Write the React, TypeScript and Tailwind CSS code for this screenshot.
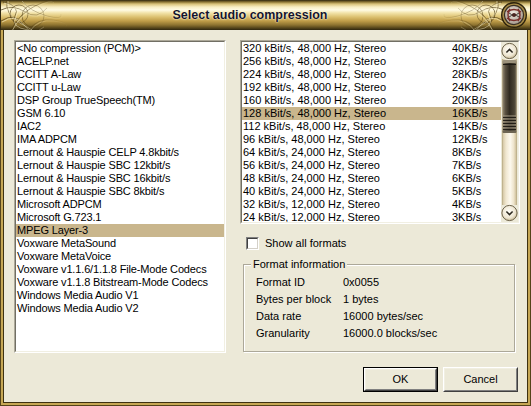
import React from 'react';

const codecs = [
  '<No compression (PCM)>',
  'ACELP.net',
  'CCITT A-Law',
  'CCITT u-Law',
  'DSP Group TrueSpeech(TM)',
  'GSM 6.10',
  'IAC2',
  'IMA ADPCM',
  'Lernout & Hauspie CELP 4.8kbit/s',
  'Lernout & Hauspie SBC 12kbit/s',
  'Lernout & Hauspie SBC 16kbit/s',
  'Lernout & Hauspie SBC 8kbit/s',
  'Microsoft ADPCM',
  'Microsoft G.723.1',
  'MPEG Layer-3',
  'Voxware MetaSound',
  'Voxware MetaVoice',
  'Voxware v1.1.6/1.1.8 File-Mode Codecs',
  'Voxware v1.1.8 Bitstream-Mode Codecs',
  'Windows Media Audio V1',
  'Windows Media Audio V2',
];

const formats: [string, string][] = [
  ['320 kBit/s, 48,000 Hz, Stereo', '40KB/s'],
  ['256 kBit/s, 48,000 Hz, Stereo', '32KB/s'],
  ['224 kBit/s, 48,000 Hz, Stereo', '28KB/s'],
  ['192 kBit/s, 48,000 Hz, Stereo', '24KB/s'],
  ['160 kBit/s, 48,000 Hz, Stereo', '20KB/s'],
  ['128 kBit/s, 48,000 Hz, Stereo', '16KB/s'],
  ['112 kBit/s, 48,000 Hz, Stereo', '14KB/s'],
  ['96 kBit/s, 48,000 Hz, Stereo', '12KB/s'],
  ['64 kBit/s, 24,000 Hz, Stereo', '8KB/s'],
  ['56 kBit/s, 24,000 Hz, Stereo', '7KB/s'],
  ['48 kBit/s, 24,000 Hz, Stereo', '6KB/s'],
  ['40 kBit/s, 24,000 Hz, Stereo', '5KB/s'],
  ['32 kBit/s, 12,000 Hz, Stereo', '4KB/s'],
  ['24 kBit/s, 12,000 Hz, Stereo', '3KB/s'],
];

const info: [string, string][] = [
  ['Format ID', '0x0055'],
  ['Bytes per block', '1 bytes'],
  ['Data rate', '16000 bytes/sec'],
  ['Granularity', '16000.0 blocks/sec'],
];

// knotwork strokes used on both ends of the caption
const knots = [
  'M2 2 Q 20 6 14 16 T 26 29',
  'M0 10 Q 12 4 24 12 T 46 8',
  'M0 21 Q 14 12 22 24 T 42 26',
  'M6 0 Q 4 14 18 22 T 30 29',
  'M10 30 Q 18 14 34 6 T 52 2',
  'M20 0 Q 30 12 46 16 T 60 14',
  'M28 30 Q 36 18 52 20 T 64 26',
];

function Knots({ id, flip }: { id: string; flip?: boolean }) {
  return (
    <svg width="66" height="30" viewBox="0 0 66 30" style={flip ? { transform: 'scaleX(-1)' } : undefined}>
      <defs>
        <linearGradient id={`${id}d`} x1="0" y1="0" x2="66" y2="0" gradientUnits="userSpaceOnUse">
          <stop offset="0" stopColor="#4a3810" stopOpacity="0.75" />
          <stop offset="0.6" stopColor="#4a3810" stopOpacity="0.3" />
          <stop offset="1" stopColor="#4a3810" stopOpacity="0" />
        </linearGradient>
        <linearGradient id={`${id}l`} x1="0" y1="0" x2="66" y2="0" gradientUnits="userSpaceOnUse">
          <stop offset="0" stopColor="#fff6cc" stopOpacity="0.9" />
          <stop offset="1" stopColor="#fff6cc" stopOpacity="0" />
        </linearGradient>
      </defs>
      <g fill="none" strokeWidth="1">
        {knots.map((d, i) => (
          <path key={`d${i}`} d={d} stroke={`url(#${id}d)`} />
        ))}
        <circle cx="18" cy="14" r="9" stroke={`url(#${id}d)`} />
        <circle cx="32" cy="16" r="11" stroke={`url(#${id}d)`} />
      </g>
      <g fill="none" strokeWidth="0.7" transform="translate(1 1)">
        {knots.map((d, i) => (
          <path key={`l${i}`} d={d} stroke={`url(#${id}l)`} />
        ))}
      </g>
    </svg>
  );
}

function Medallion() {
  return (
    <svg width="28" height="28" viewBox="0 0 28 28">
      <defs>
        <radialGradient id="medIn" cx="0.45" cy="0.4" r="0.6">
          <stop offset="0" stopColor="#f2ece4" />
          <stop offset="1" stopColor="#a89c90" />
        </radialGradient>
      </defs>
      <circle cx="14" cy="14" r="13" fill="#2c220c" />
      <circle cx="14" cy="14" r="11.6" fill="#a88c48" />
      <circle cx="14" cy="14" r="10.2" fill="#3a3024" />
      <circle cx="14" cy="14" r="9" fill="url(#medIn)" />
      <g fill="none" stroke="#7a2e2a" strokeWidth="1.4">
        <path d="M7 11 Q 14 6 21 11" />
        <path d="M7 17 Q 14 22 21 17" />
        <path d="M10 8 Q 6 14 10 20" />
        <path d="M18 8 Q 22 14 18 20" />
      </g>
      <g fill="none" stroke="#2e2a26" strokeWidth="0.9">
        <path d="M9 12 Q 14 16 19 12" />
        <path d="M9 16 Q 14 12 19 16" />
      </g>
      <circle cx="14" cy="14" r="2" fill="#4a2420" />
    </svg>
  );
}

function TitleBar() {
  return (
    <div className="relative h-[30px] shrink-0 overflow-hidden border-x border-[#2e2610] bg-[linear-gradient(to_bottom,#2e2610_0px,#8a7434_2px,#d9c27a_4px,#f8eec4_7px,#fffbe4_10px,#f2e2a8_13px,#dcc070_17px,#bf9c48_21px,#8c7230_25px,#54441a_28px,#2e2610_30px)]">
      <div className="absolute left-0 top-0">
        <Knots id="kl" />
      </div>
      <div className="absolute right-[26px] top-0">
        <Knots id="kr" flip />
      </div>
      <div className="flex h-full items-center justify-center pr-[31px]">
        <span className="text-[12.5px] font-bold leading-[30px] text-[#15142c] [text-shadow:0_0_2px_#fffbe0,0_0_1px_#fffbe0]">
          Select audio compression
        </span>
      </div>
      <div className="absolute right-[2px] top-[1px]">
        <Medallion />
      </div>
    </div>
  );
}

function Sunken({ className, children }: { className: string; children: React.ReactNode }) {
  return (
    <div className={`border border-t-[#aca899] border-l-[#aca899] border-r-white border-b-white ${className}`}>
      <div className="flex h-full overflow-hidden border border-t-[#716f64] border-l-[#716f64] border-r-[#f1efe2] border-b-[#f1efe2] bg-white">
        {children}
      </div>
    </div>
  );
}

function ScrollBar() {
  return (
    <svg width="17" height="180" viewBox="0 0 17 180" className="shrink-0">
      <defs>
        <linearGradient id="track" x1="0" y1="0" x2="1" y2="0">
          <stop offset="0" stopColor="#d2c4a0" />
          <stop offset="0.25" stopColor="#f0e7d0" />
          <stop offset="0.55" stopColor="#fdf9ee" />
          <stop offset="0.8" stopColor="#eee4cc" />
          <stop offset="1" stopColor="#cbbb94" />
        </linearGradient>
        <linearGradient id="thumb" x1="0" y1="0" x2="1" y2="0">
          <stop offset="0" stopColor="#958a74" />
          <stop offset="0.2" stopColor="#5c5343" />
          <stop offset="0.5" stopColor="#302a20" />
          <stop offset="0.85" stopColor="#4c4536" />
          <stop offset="1" stopColor="#817762" />
        </linearGradient>
        <radialGradient id="btn" cx="0.45" cy="0.4" r="0.6">
          <stop offset="0" stopColor="#fffef8" />
          <stop offset="0.7" stopColor="#eee6d2" />
          <stop offset="1" stopColor="#c9bb98" />
        </radialGradient>
      </defs>
      <rect x="0" y="0" width="17" height="180" fill="#ece9d8" />
      <rect x="1.5" y="17" width="14" height="146" fill="url(#track)" />
      <line x1="1.5" y1="17" x2="1.5" y2="163" stroke="#b8a984" strokeWidth="0.8" />
      <line x1="15.5" y1="17" x2="15.5" y2="163" stroke="#b8a984" strokeWidth="0.8" />

      <circle cx="8.5" cy="9" r="7.6" fill="url(#btn)" stroke="#6b6048" strokeWidth="1" />
      <polyline points="5.4,10.6 8.5,7.4 11.6,10.6" fill="none" stroke="#2c2820" strokeWidth="1.5" />

      <rect x="1.5" y="18" width="14" height="73" rx="3" fill="url(#thumb)" />
      <rect x="1.5" y="18" width="14" height="3" rx="1.5" fill="#9c927c" />
      <line x1="2" y1="22.5" x2="15" y2="22.5" stroke="#1e1a14" strokeWidth="1" />
      {[74, 77, 80, 83, 86].map((y) => (
        <g key={y}>
          <line x1="2" y1={y} x2="15" y2={y} stroke="#a89e88" strokeWidth="1" />
          <line x1="2" y1={y + 1.4} x2="15" y2={y + 1.4} stroke="#1e1a14" strokeWidth="1" />
        </g>
      ))}
      <rect x="1.5" y="88.5" width="14" height="2.5" rx="1" fill="#6e6654" />

      <circle cx="8.5" cy="171" r="7.6" fill="url(#btn)" stroke="#6b6048" strokeWidth="1" />
      <polyline points="5.4,169.4 8.5,172.6 11.6,169.4" fill="none" stroke="#2c2820" strokeWidth="1.5" />
    </svg>
  );
}

function Checkbox({ label }: { label: string }) {
  return (
    <div className="flex h-[13px] items-center">
      <div className="h-[13px] w-[13px] border border-t-[#808080] border-l-[#808080] border-r-white border-b-white">
        <div className="h-full border border-t-[#404040] border-l-[#404040] border-r-[#d4d0c8] border-b-[#d4d0c8] bg-white" />
      </div>
      <span className="ml-[6px] leading-[13px]">{label}</span>
    </div>
  );
}

function Button({ label, isDefault }: { label: string; isDefault?: boolean }) {
  return (
    <div className={`h-[25px] w-[75px] ${isDefault ? 'border border-black' : ''}`}>
      <div className="h-full border border-t-white border-l-white border-r-[#404040] border-b-[#404040]">
        <div className="flex h-full items-center justify-center border border-t-[#f1efe2] border-l-[#f1efe2] border-r-[#808080] border-b-[#808080] bg-[#ece9d8]">
          {label}
        </div>
      </div>
    </div>
  );
}

export default function App() {
  return (
    <div className="flex h-[406px] w-[531px] flex-col overflow-hidden font-['Liberation_Sans',Arial,sans-serif] text-[11px] text-black">
      <TitleBar />

      {/* window frame: dark / gold / dark */}
      <div className="flex flex-1 bg-[#55441a] px-px pb-px">
        <div className="flex flex-1 bg-[#c6a754] px-[2px] pb-[2px]">
          <div className="flex flex-1 bg-[#3e3110] px-px pb-px">
            <div className="flex flex-1 flex-col bg-[#ece9d8] pb-[10px] pl-[10px] pr-[7px] pt-[10px]">
              <div className="flex h-[313px] gap-[14px]">
                {/* codec list */}
                <Sunken className="h-full w-[212px]">
                  <div className="flex-1">
                    {codecs.map((c) => (
                      <div
                        key={c}
                        className={`h-[13px] whitespace-nowrap pl-[1px] leading-[13px] tracking-[-0.15px] ${c === 'MPEG Layer-3' ? 'bg-[#c9b68d]' : ''}`}
                      >
                        {c}
                      </div>
                    ))}
                  </div>
                </Sunken>

                {/* formats + info */}
                <div className="flex w-[280px] flex-col">
                  <Sunken className="h-[184px]">
                    <div className="flex-1">
                      {formats.map(([f, r]) => (
                        <div
                          key={f}
                          className={`flex h-[13px] whitespace-nowrap pl-[1px] leading-[13px] ${f.startsWith('128') ? 'bg-[#c9b68d]' : ''}`}
                        >
                          <span className="w-[209px]">{f}</span>
                          <span>{r}</span>
                        </div>
                      ))}
                    </div>
                    <ScrollBar />
                  </Sunken>

                  <div className="ml-[6px] mt-[13px]">
                    <Checkbox label="Show all formats" />
                  </div>

                  <div className="relative ml-[3px] mr-[5px] mt-[14px] h-[88px] border border-[#aca899] shadow-[inset_1px_1px_0_#fff,1px_1px_0_#fff]">
                    <span className="absolute -top-[7px] left-[7px] bg-[#ece9d8] px-[2px] leading-[13px]">
                      Format information
                    </span>
                    <div className="pl-[12px] pt-[9px]">
                      {info.map(([k, v]) => (
                        <div key={k} className="flex h-[17px] leading-[17px]">
                          <span className="w-[87px]">{k}</span>
                          <span>{v}</span>
                        </div>
                      ))}
                    </div>
                  </div>
                </div>
              </div>

              <div className="mr-[2px] mt-[14px] flex justify-end gap-[5px]">
                <Button label="OK" isDefault />
                <Button label="Cancel" />
              </div>
            </div>
          </div>
        </div>
      </div>
    </div>
  );
}
